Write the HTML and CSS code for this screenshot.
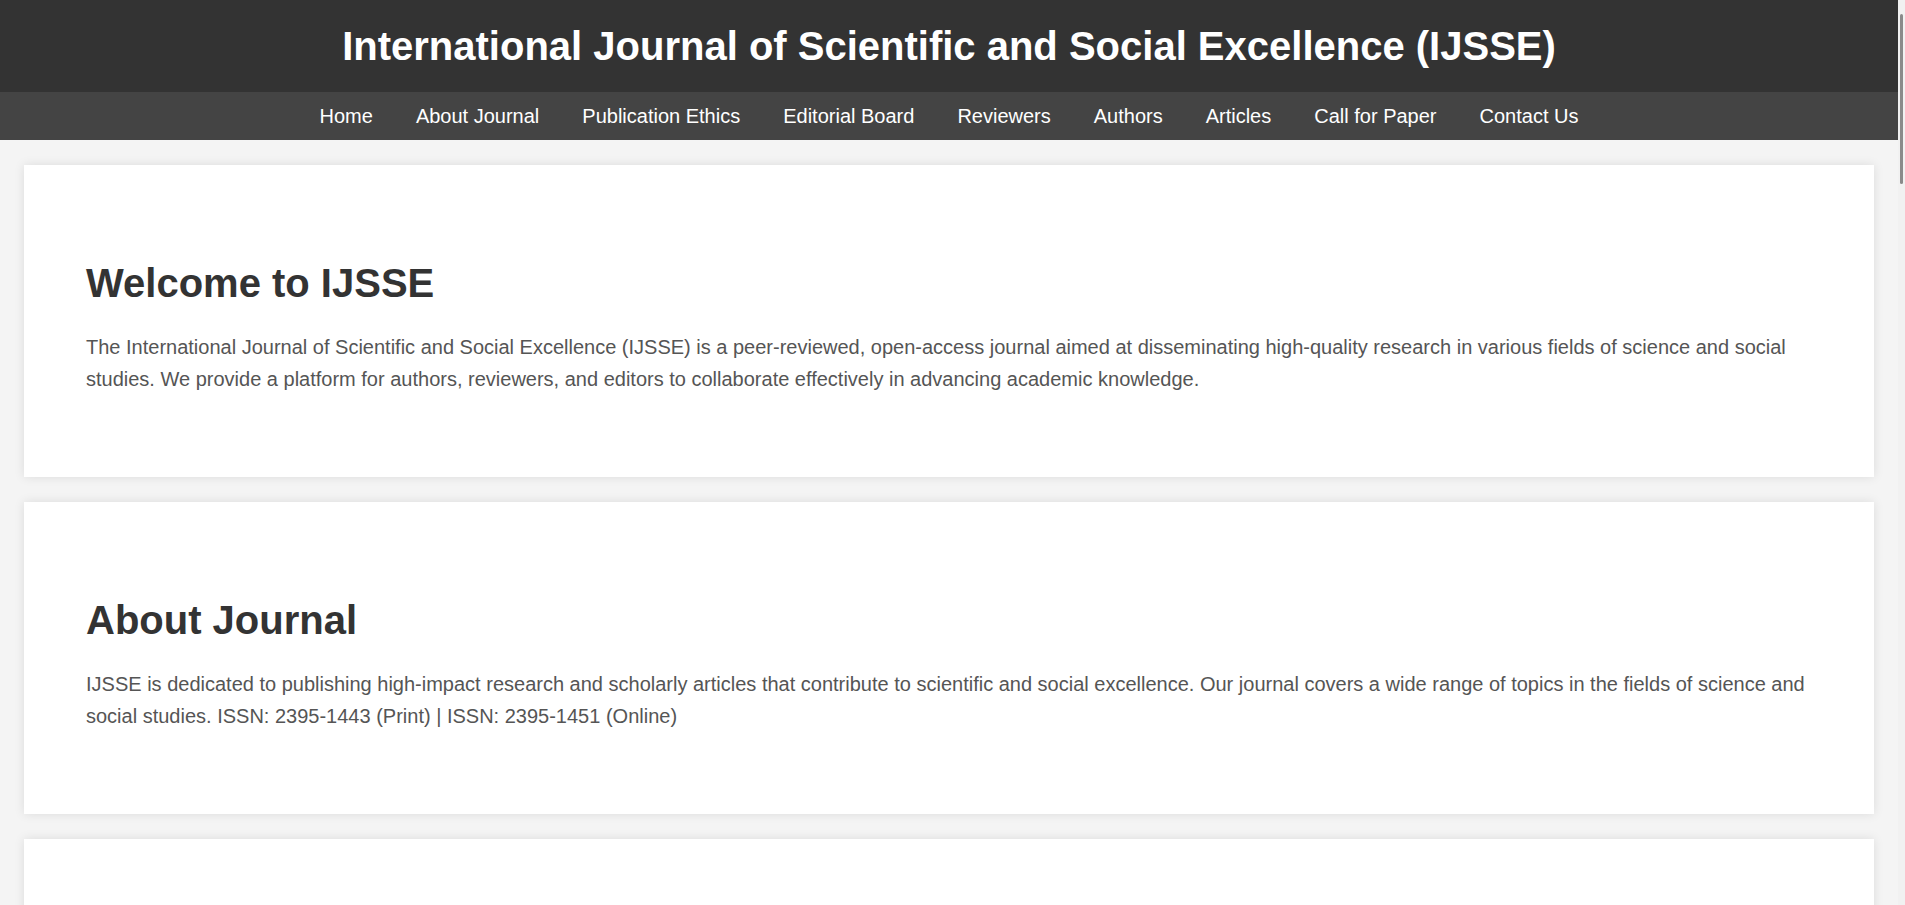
FILE: index.html
```html
<!DOCTYPE html>
<html lang="en">
<head>
<meta charset="utf-8">
<title>International Journal of Scientific and Social Excellence (IJSSE)</title>
<link rel="stylesheet" href="styles.css">
</head>
<body>
<header class="site-header">
  <h1 class="site-title">International Journal of Scientific and Social Excellence (IJSSE)</h1>
</header>
<nav class="site-nav">
  <a href="#home">Home</a>
  <a href="#about">About Journal</a>
  <a href="#ethics">Publication Ethics</a>
  <a href="#board">Editorial Board</a>
  <a href="#reviewers">Reviewers</a>
  <a href="#authors">Authors</a>
  <a href="#articles">Articles</a>
  <a href="#call">Call for Paper</a>
  <a href="#contact">Contact Us</a>
</nav>
<main class="content">
  <section class="card" id="home">
    <h2>Welcome to IJSSE</h2>
    <p>The International Journal of Scientific and Social Excellence (IJSSE) is a peer-reviewed, open-access journal aimed at disseminating high-quality research in various fields of science and social studies. We provide a platform for authors, reviewers, and editors to collaborate effectively in advancing academic knowledge.</p>
  </section>
  <section class="card" id="about">
    <h2>About Journal</h2>
    <p>IJSSE is dedicated to publishing high-impact research and scholarly articles that contribute to scientific and social excellence. Our journal covers a wide range of topics in the fields of science and social studies. ISSN: 2395-1443 (Print) | ISSN: 2395-1451 (Online)</p>
  </section>
  <section class="card" id="ethics">
    <h2>Publication Ethics</h2>
    <p>IJSSE follows strict ethical guidelines to ensure the integrity of published research.</p>
  </section>
</main>
<div class="scroll-thumb" aria-hidden="true"></div>
</body>
</html>
```

FILE: styles.css
```css
html {
  background: #f1f1f1;
}

body {
  margin: 0 7px 0 0;
  background: #f4f4f4;
  font-family: "Liberation Sans", Arial, sans-serif;
  color: #333;
}

.scroll-thumb {
  position: fixed;
  top: 14px;
  right: 2px;
  width: 3px;
  height: 170px;
  background: #8a8a8a;
  border-radius: 2px;
}

.site-header {
  background: #333;
  color: #fff;
  padding: 23px 0;
  text-align: center;
}

.site-title {
  margin: 0;
  font-size: 40px;
  font-weight: bold;
  line-height: 46px;
}

.site-nav {
  background: #444;
  display: flex;
  justify-content: center;
  gap: 43px;
  padding: 12px 0;
}

.site-nav a {
  color: #fff;
  text-decoration: none;
  font-size: 20px;
  line-height: 24px;
}

.content {
  padding: 25px 24px 1px;
}

.card {
  background: #fff;
  box-shadow: 0 0 10px rgba(0, 0, 0, 0.1);
  padding: 62px;
  margin-bottom: 25px;
}

.card h2 {
  margin: 33px 0 25px;
  font-size: 40px;
  line-height: 46px;
  color: #333;
}

.card p {
  margin: 0 0 20px;
  font-size: 20px;
  line-height: 32px;
  color: #555;
}
```
